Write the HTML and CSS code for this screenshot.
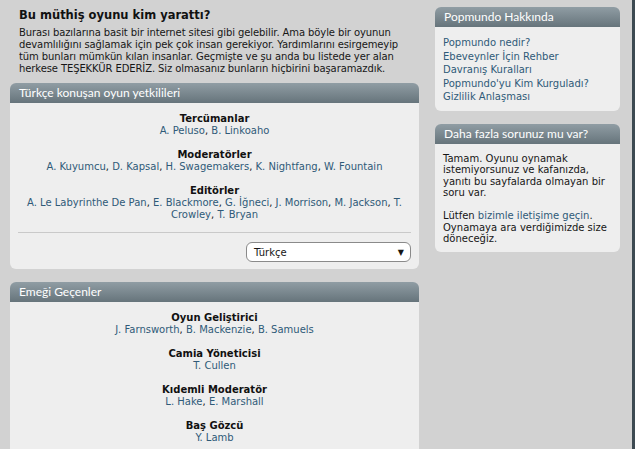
FILE: index.html
```html
<!DOCTYPE html>
<html>

<head>
    <meta charset="utf-8">
    <title>Popmundo - Emeği Geçenler</title>
    <link rel="stylesheet" href="styles.css">
</head>

<body>
    <div class="page">
        <div class="main">
            <h1>Bu müthiş oyunu kim yarattı?</h1>
            <p class="intro">
                Burası bazılarına basit bir internet sitesi gibi gelebilir. Ama böyle bir oyunun<br>
                devamlılığını sağlamak için pek çok insan gerekiyor. Yardımlarını esirgemeyip<br>
                tüm bunları mümkün kılan insanlar. Geçmişte ve şu anda bu listede yer alan<br>
                herkese TEŞEKKÜR EDERİZ. Siz olmasanız bunların hiçbirini başaramazdık.
            </p>

            <div class="box">
                <div class="box-head">Türkçe konuşan oyun yetkilileri</div>
                <div class="box-body credits">
                    <div class="group">
                        <h4>Tercümanlar</h4>
                        <div><a href="#">A. Peluso</a>, <a href="#">B. Linkoaho</a></div>
                    </div>
                    <div class="group">
                        <h4>Moderatörler</h4>
                        <div><a href="#">A. Kuyumcu</a>, <a href="#">D. Kapsal</a>, <a href="#">H. Swagemakers</a>, <a href="#">K. Nightfang</a>, <a href="#">W. Fountain</a></div>
                    </div>
                    <div class="group">
                        <h4>Editörler</h4>
                        <div><a href="#">A. Le Labyrinthe De Pan</a>, <a href="#">E. Blackmore</a>, <a href="#">G. İğneci</a>, <a href="#">J. Morrison</a>, <a href="#">M. Jackson</a>, <a href="#">T. Crowley</a>, <a href="#">T. Bryan</a></div>
                    </div>
                    <hr>
                    <div class="lang">
                        <div class="select">
                            <span>Türkçe</span>
                            <span class="arrow">▼</span>
                        </div>
                    </div>
                </div>
            </div>

            <div class="box">
                <div class="box-head">Emeği Geçenler</div>
                <div class="box-body credits">
                    <div class="group">
                        <h4>Oyun Geliştirici</h4>
                        <div><a href="#">J. Farnsworth</a>, <a href="#">B. Mackenzie</a>, <a href="#">B. Samuels</a></div>
                    </div>
                    <div class="group">
                        <h4>Camia Yöneticisi</h4>
                        <div><a href="#">T. Cullen</a></div>
                    </div>
                    <div class="group">
                        <h4>Kıdemli Moderatör</h4>
                        <div><a href="#">L. Hake</a>, <a href="#">E. Marshall</a></div>
                    </div>
                    <div class="group">
                        <h4>Baş Gözcü</h4>
                        <div><a href="#">Y. Lamb</a></div>
                    </div>
                </div>
            </div>
        </div>

        <div class="side">
            <div class="box">
                <div class="box-head">Popmundo Hakkında</div>
                <div class="box-body links">
                    <a href="#">Popmundo nedir?</a>
                    <a href="#">Ebeveynler İçin Rehber</a>
                    <a href="#">Davranış Kuralları</a>
                    <a href="#">Popmundo'yu Kim Kurguladı?</a>
                    <a href="#">Gizlilik Anlaşması</a>
                </div>
            </div>

            <div class="box">
                <div class="box-head">Daha fazla sorunuz mu var?</div>
                <div class="box-body info">
                    <p>Tamam. Oyunu oynamak istemiyorsunuz ve kafanızda, yanıtı bu sayfalarda olmayan bir soru var.</p>
                    <p>Lütfen <a href="#">bizimle iletişime geçin</a>. Oynamaya ara verdiğimizde size döneceğiz.</p>
                </div>
            </div>
        </div>
    </div>
</body>

</html>
```

FILE: styles.css
```css
html,
body {
    margin: 0;
    height: 100%;
    overflow: hidden;
}

body {
    background: #d2d2d2;
    border-right: 3px solid #3d4a52;
    box-sizing: border-box;
    font-family: "DejaVu Sans", Verdana, sans-serif;
    font-size: 10px;
    color: #161616;
}

a {
    color: #2f5a78;
    text-decoration: none;
}

.page {
    display: flex;
    align-items: flex-start;
    gap: 16px;
    padding: 7px 0 0 10px;
}

.main {
    width: 409px;
}

.side {
    width: 185px;
}

h1 {
    margin: 0;
    padding-left: 9px;
    font-size: 11.5px;
    line-height: 16px;
    color: #111;
}

.intro {
    margin: 4px 0 8px;
    padding-left: 9px;
    line-height: 12px;
    white-space: nowrap;
    letter-spacing: -0.1px;
}

.box {
    margin-bottom: 13px;
}

.box-head {
    height: 20px;
    line-height: 20px;
    padding-left: 9px;
    border-radius: 6px 6px 0 0;
    background: linear-gradient(#909da4, #66747b);
    color: #fff;
    font-family: Lato, "Open Sans", sans-serif;
    font-size: 12px;
}

.box-body {
    background: #eeeeee;
    border-radius: 0 0 6px 6px;
    padding: 9px 8px 7px;
}

.credits {
    text-align: center;
}

.group {
    margin-bottom: 11px;
}

.group h4 {
    margin: 0;
    font-size: 10px;
    line-height: 13px;
    color: #111;
}

.group div {
    line-height: 12px;
}

hr {
    border: 0;
    border-top: 1px solid #c9c9c9;
    margin: 10px 0 9px;
}

.lang {
    display: flex;
    justify-content: flex-end;
}

.select {
    display: flex;
    justify-content: space-between;
    align-items: center;
    width: 165px;
    height: 20px;
    box-sizing: border-box;
    padding: 0 6px 0 7px;
    background: #fff;
    border: 1px solid #8a8a8a;
    border-radius: 6px;
    text-align: left;
}

.select .arrow {
    font-size: 8px;
}

.links {
    padding-left: 8px;
}

.links a {
    display: block;
    line-height: 13.5px;
}

.info p {
    margin: 0 0 11.5px;
    line-height: 11.5px;
}

.info p:last-child {
    margin-bottom: 0;
}
```
